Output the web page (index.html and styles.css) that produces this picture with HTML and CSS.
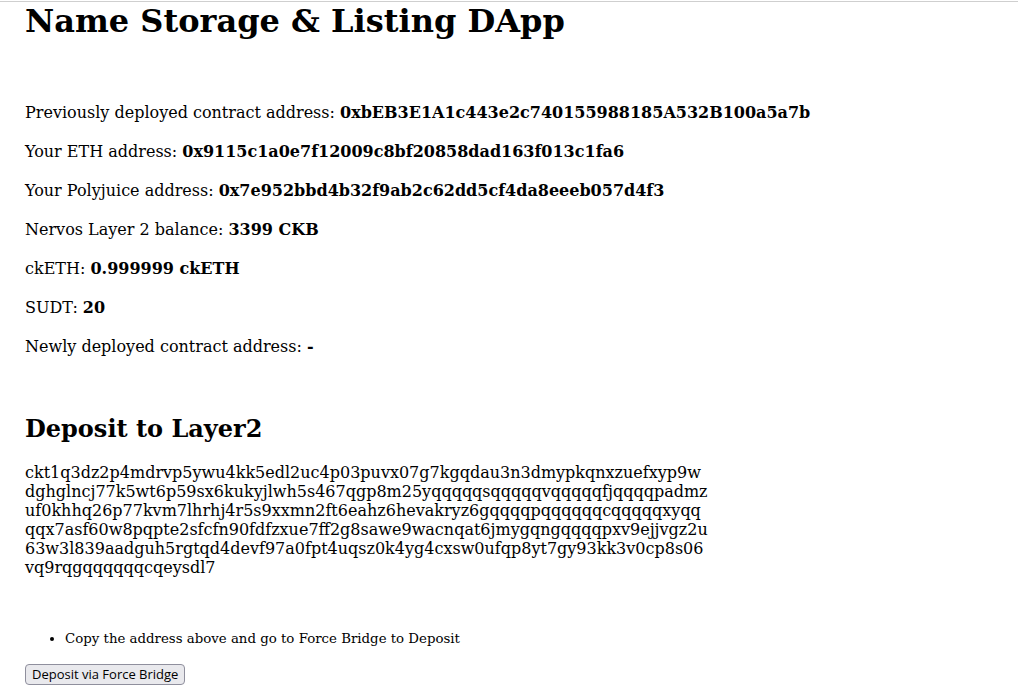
FILE: index.html
```html
<!DOCTYPE html>
<html>
<head>
<meta charset="utf-8">
<link rel="stylesheet" href="styles.css">
</head>
<body>
<div class="topline"></div>
<div class="app">
  <h1 class="title">Name Storage &amp; Listing DApp</h1>
  <div class="info">
    <p class="row">Previously deployed contract address: <b>0xbEB3E1A1c443e2c740155988185A532B100a5a7b</b></p>
    <p class="row">Your ETH address: <b>0x9115c1a0e7f12009c8bf20858dad163f013c1fa6</b></p>
    <p class="row">Your Polyjuice address: <b>0x7e952bbd4b32f9ab2c62dd5cf4da8eeeb057d4f3</b></p>
    <p class="row">Nervos Layer 2 balance: <b>3399 CKB</b></p>
    <p class="row">ckETH: <b>0.999999 ckETH</b></p>
    <p class="row">SUDT: <b>20</b></p>
    <p class="row">Newly deployed contract address: <b>-</b></p>
  </div>
  <h2 class="subtitle">Deposit to Layer2</h2>
  <div class="address">ckt1q3dz2p4mdrvp5ywu4kk5edl2uc4p03puvx07g7kgqdau3n3dmypkqnxzuefxyp9wdghglncj77k5wt6p59sx6kukyjlwh5s467qgp8m25yqqqqqsqqqqqvqqqqqfjqqqqpadmzuf0khhq26p77kvm7lhrhj4r5s9xxmn2ft6eahz6hevakryz6gqqqqpqqqqqqcqqqqqxyqqqqx7asf60w8pqpte2sfcfn90fdfzxue7ff2g8sawe9wacnqat6jmygqngqqqqpxv9ejjvgz2u63w3l839aadguh5rgtqd4devf97a0fpt4uqsz0k4yg4cxsw0ufqp8yt7gy93kk3v0cp8s06vq9rqgqqqqqqcqeysdl7</div>
  <ul class="notes">
    <li>Copy the address above and go to Force Bridge to Deposit</li>
  </ul>
  <button class="btn">Deposit via Force Bridge</button>
</div>
</body>
</html>
```

FILE: styles.css
```css
html, body {
  margin: 0;
  padding: 0;
  background: #ffffff;
}
body {
  font-family: "DejaVu Serif", serif;
  color: #000;
}
.topline {
  height: 1px;
  margin-top: 1px;
  background: #cfcfcf;
}
.app {
  padding: 0 25px;
}
.title {
  font-size: 32px;
  font-weight: bold;
  line-height: 37px;
  margin: 1px 0 0;
}
.info {
  padding-top: 63px;
}
.row {
  font-size: 16px;
  line-height: 19px;
  margin: 0 0 20px;
}
.row b {
  font-weight: bold;
}
.subtitle {
  font-size: 24px;
  font-weight: bold;
  line-height: 28px;
  margin: 59px 0 0;
}
.address {
  font-size: 16px;
  line-height: 19px;
  margin-top: 20px;
  width: 686px;
  word-break: break-all;
}
.notes {
  margin: 54px 0 0;
  padding-left: 40px;
  font-size: 13.333px;
  line-height: 16px;
}
.btn {
  margin-top: 17px;
  font-family: "Open Sans", "DejaVu Sans", sans-serif;
  font-size: 13px;
  color: #000;
  background: #e9e9ed;
  border: 1px solid #8f8f9d;
  border-radius: 4px;
  padding: 1px 6px;
  line-height: 17px;
}
```
